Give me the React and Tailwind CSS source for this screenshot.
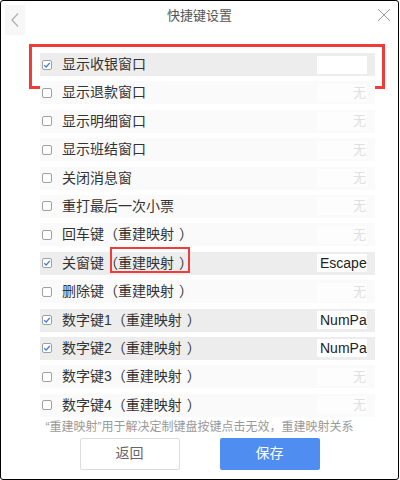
import React from "react";

const rows = [
  { label: "显示收银窗口", checked: true, value: "", redRow: true },
  { label: "显示退款窗口" },
  { label: "显示明细窗口" },
  { label: "显示班结窗口" },
  { label: "关闭消息窗" },
  { label: "重打最后一次小票" },
  { label: "回车键（重建映射）" },
  { label: "关窗键（重建映射）", checked: true, value: "Escape", redText: true },
  { label: "删除键（重建映射）" },
  { label: "数字键1（重建映射）", checked: true, value: "NumPad1" },
  { label: "数字键2（重建映射）", checked: true, value: "NumPad2" },
  { label: "数字键3（重建映射）" },
  { label: "数字键4（重建映射）" },
];

function Label({ text }) {
  const j = text.indexOf("）");
  if (j < 0) return text;
  return (
    <>
      {text.slice(0, j)}
      <span className="pl-[5px]">）</span>
    </>
  );
}

function Checkbox({ checked }) {
  return (
    <span className="flex h-[10px] w-[10px] shrink-0 items-center justify-center rounded-[2px] border border-[#a0a0a0] bg-white">
      {checked && (
        <svg width="8" height="8" viewBox="0 0 8 8">
          <path d="M1.2 4.2 L3.2 6 L6.8 1.8" fill="none" stroke="#3f7fe0" strokeWidth="1.3" />
        </svg>
      )}
    </span>
  );
}

function Row({ row }) {
  return (
    <div
      className={
        "relative flex h-[23px] items-center pl-[2px] pr-[8px] " +
        (row.checked ? "bg-[#ededed]" : "bg-[#fafafa]")
      }
    >
      <Checkbox checked={row.checked} />
      <span className="ml-[10px] flex-1 whitespace-nowrap text-[14px] leading-[23px] text-[#333]">
        <Label text={row.label} />
      </span>
      {row.checked ? (
        <div className="h-[18px] w-[50px] overflow-hidden whitespace-nowrap bg-white pl-[3px] text-[14px] leading-[18px] text-[#222]">
          {row.value}
        </div>
      ) : (
        <div className="h-[18px] w-[50px] bg-[#fdfdfd] pr-[1px] text-right text-[13px] leading-[18px] text-[#e0e0e0]">
          无
        </div>
      )}
      {row.redRow && (
        <div className="pointer-events-none absolute left-[-11px] right-[-10px] top-[-9px] bottom-[-13px] border-[3px] border-[#f23a3a]" />
      )}
      {row.redText && (
        <div className="pointer-events-none absolute left-[70px] top-[-5px] h-[26px] w-[80px] border-2 border-[#f23a3a]" />
      )}
    </div>
  );
}

export default function App() {
  return (
    <div
      className="flex h-[480px] w-[399px] flex-col overflow-hidden rounded-[3px] border border-black bg-white"
      style={{ fontFamily: '"Liberation Sans", "Noto Sans CJK SC", sans-serif' }}
    >
      <div className="relative flex h-[52px] shrink-0 items-start justify-center">
        <div className="absolute left-[4px] top-[4px] flex h-[30px] w-[20px] items-center justify-center bg-[#f7f7f7]">
          <svg width="10" height="16" viewBox="0 0 10 16">
            <path d="M8 1.5 L2 8 L8 14.5" fill="none" stroke="#b0b0b0" strokeWidth="1.3" />
          </svg>
        </div>
        <div className="pt-[5px] text-[13px] leading-[20px] text-[#555]">快捷键设置</div>
        <div className="absolute right-[7px] top-[7px]">
          <svg width="14" height="14" viewBox="0 0 14 14">
            <path d="M1 1 L13 13 M13 1 L1 13" fill="none" stroke="#9a9a9a" strokeWidth="1" />
          </svg>
        </div>
      </div>
      <div className="ml-[39px] mr-[23px] flex flex-col gap-[5.4px]">
        {rows.map((r, i) => (
          <Row key={i} row={r} />
        ))}
      </div>
      <div className="mt-[2px] text-center text-[12px] leading-[16px] text-[#999]">
        “重建映射”用于解决定制键盘按键点击无效，重建映射关系
      </div>
      <div className="mt-[3px] flex justify-center gap-[40px]">
        <button className="h-[32px] w-[100px] rounded-[2px] border border-[#dcdcdc] bg-white text-[14px] text-[#666]">
          返回
        </button>
        <button className="h-[32px] w-[100px] rounded-[2px] bg-[#4f8ef0] text-[14px] text-white">
          保存
        </button>
      </div>
    </div>
  );
}
